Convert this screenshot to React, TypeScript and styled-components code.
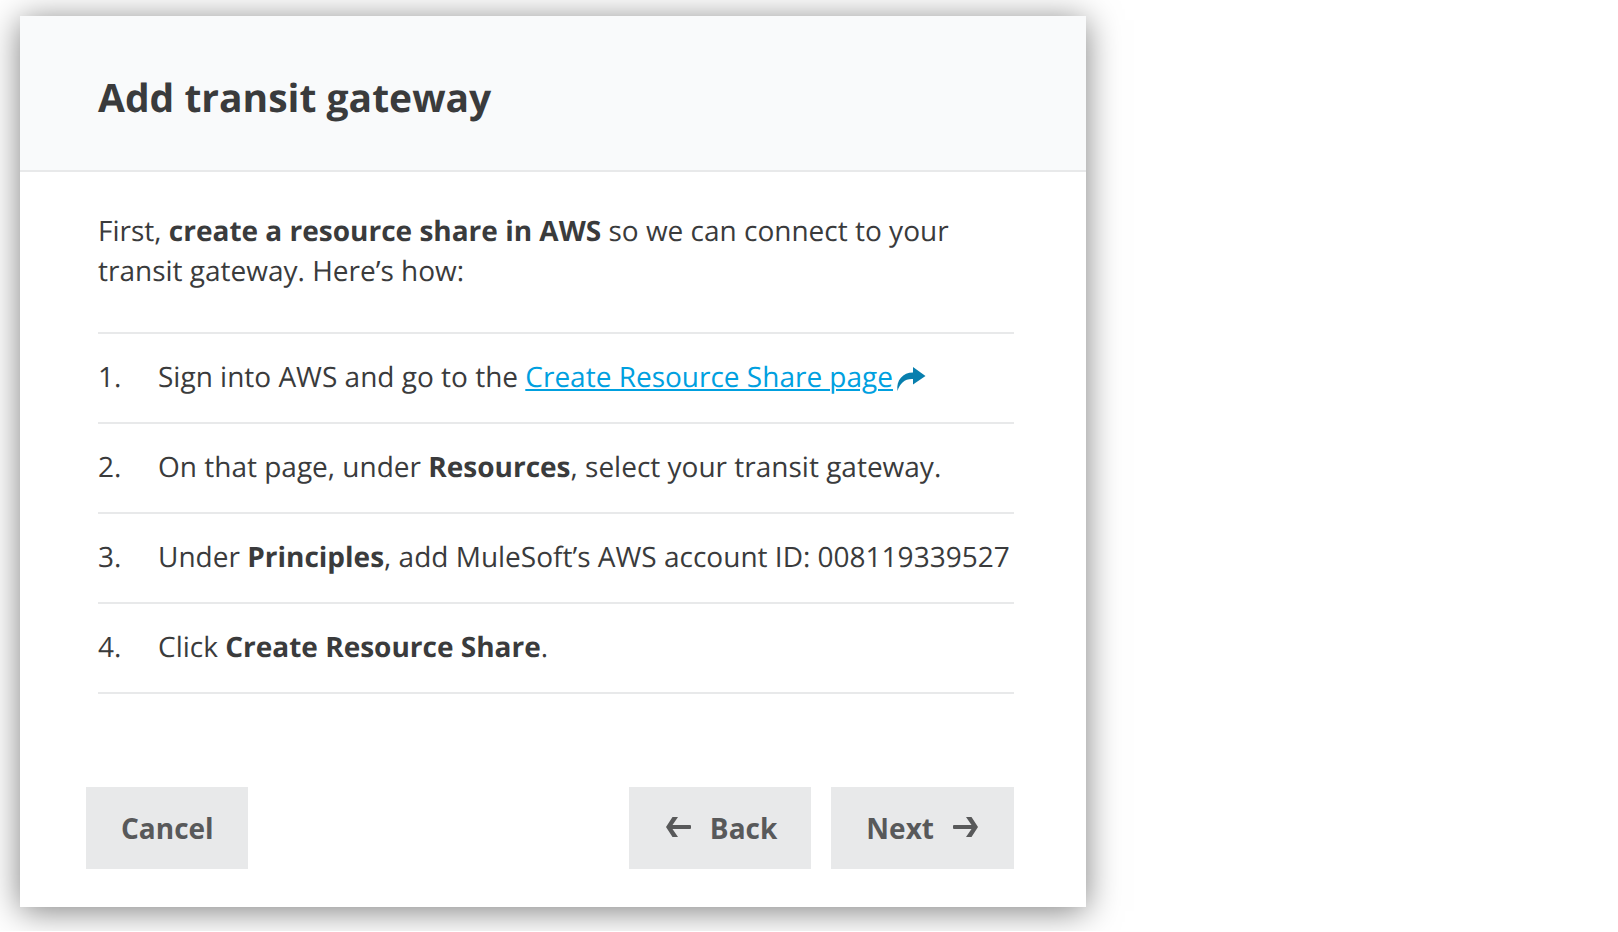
import React from "react";
import styled, { createGlobalStyle } from "styled-components";

const GlobalStyle = createGlobalStyle`
  *, *::before, *::after {
    box-sizing: border-box;
  }
  body {
    margin: 0;
    background: #ffffff;
    color: #3a3b3c;
    font-family: "Open Sans", "Noto Sans", sans-serif;
    font-size: 28px;
    line-height: 40px;
    text-rendering: geometricPrecision;
  }
`;

const Page = styled.div`
  padding: 16px 20px 24px;
`;

const Dialog = styled.section`
  width: 100%;
  max-width: 1066px;
  background: #ffffff;
  box-shadow: 0 4px 32px rgba(0, 0, 0, 0.5);
`;

const Header = styled.header`
  padding: 54px 78px 44px;
  background: #f9fafb;
  border-bottom: 2px solid #e8e9ea;
`;

const Title = styled.h1`
  margin: 0;
  font-size: 39px;
  line-height: 56px;
  font-weight: 700;
`;

const Content = styled.div`
  padding: 39px 72px 0 78px;
`;

const Intro = styled.p`
  margin: 0 0 41px;
`;

const Steps = styled.ol`
  margin: 0;
  padding: 0;
  list-style: none;
  border-top: 2px solid #e8e9ea;
`;

const Step = styled.li`
  display: flex;
  padding: 23px 0 25px;
  border-bottom: 2px solid #e8e9ea;
`;

const StepNumber = styled.span`
  flex: 0 0 60px;
`;

const StepLink = styled.a`
  color: #00a0df;
  text-decoration: underline;
  text-decoration-thickness: 2px;
  text-underline-offset: 2px;
`;

const ShareIcon = styled.svg`
  margin-left: 3px;
  vertical-align: -5px;
`;

const Footer = styled.footer`
  display: flex;
  flex-wrap: wrap;
  gap: 20px;
  padding: 93px 72px 38px 66px;
`;

const Button = styled.button<{ $pushRight?: boolean }>`
  display: inline-flex;
  align-items: center;
  gap: 16px;
  height: 82px;
  margin: 0 0 0 ${(p) => (p.$pushRight ? "auto" : "0")};
  padding: 0 34px 0 35px;
  border: 0;
  background: #e8e9ea;
  color: #58595a;
  font: inherit;
  font-weight: 700;
  cursor: pointer;
`;

const ArrowIcon = ({ back = false }: { back?: boolean }) => (
  <svg width="30" height="24" viewBox="0 0 30 24" fill="currentColor" aria-hidden="true">
    <path
      transform={back ? "matrix(-1 0 0 1 30 0)" : undefined}
      d="M4 9h17.5L16 1h5.5L28 11 21.500 21H16l5.500-8H4a1 1 0 0 1-1-1v-2a1 1 0 0 1 1-1z"
    />
  </svg>
);

const steps: React.ReactNode[] = [
  <>
    Sign into AWS and go to the <StepLink href="#create-resource-share">Create Resource Share page</StepLink>
    <ShareIcon width="30" height="26" viewBox="0 0 30 26" aria-hidden="true">
      <path d="M17 1L29.500 10L17 18.500V13C9 12.500 4 17 1.500 25C0 14 7 6.500 17 6.500Z" fill="#087fae" />
    </ShareIcon>
  </>,
  <>
    On that page, under <b>Resources</b>, select your transit gateway.
  </>,
  <>
    Under <b>Principles</b>, add MuleSoft’s AWS account ID: 008119339527
  </>,
  <>
    Click <b>Create Resource Share</b>.
  </>,
];

export default function App() {
  return (
    <Page>
      <GlobalStyle />
      <Dialog role="dialog" aria-labelledby="dialog-title">
        <Header>
          <Title id="dialog-title">Add transit gateway</Title>
        </Header>
        <Content>
          <Intro>
            First, <b>create a resource share in AWS</b> so we can connect to your transit gateway. Here’s how:
          </Intro>
          <Steps>
            {steps.map((step, i) => (
              <Step key={i}>
                <StepNumber>{i + 1}.</StepNumber>
                <div>{step}</div>
              </Step>
            ))}
          </Steps>
        </Content>
        <Footer>
          <Button type="button">Cancel</Button>
          <Button type="button" $pushRight>
            <ArrowIcon back />
            Back
          </Button>
          <Button type="button">
            Next
            <ArrowIcon />
          </Button>
        </Footer>
      </Dialog>
    </Page>
  );
}
